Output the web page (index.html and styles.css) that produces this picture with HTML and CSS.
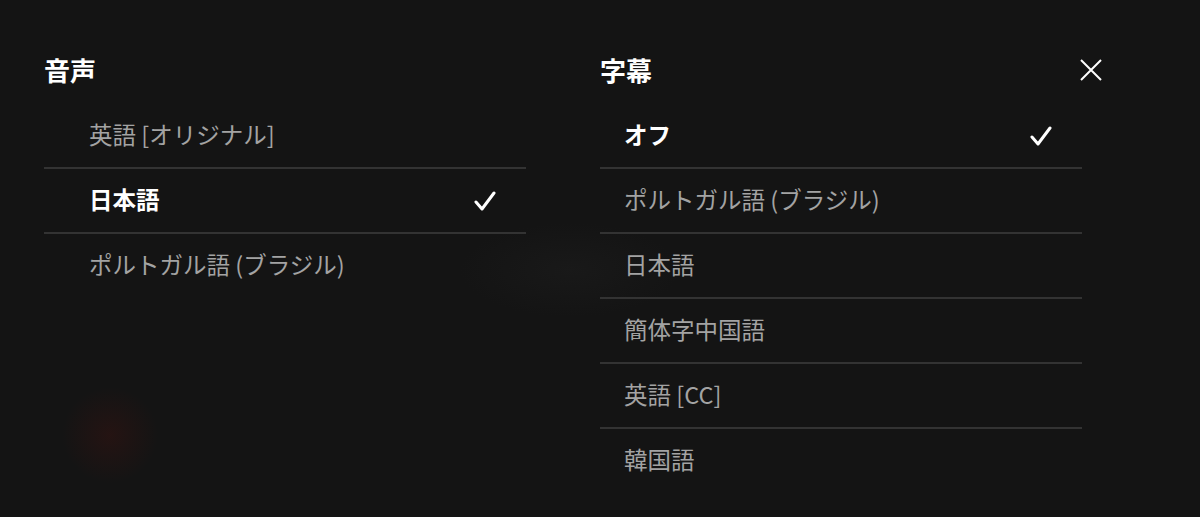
FILE: index.html
```html
<!DOCTYPE html>
<html lang="ja">
<head>
  <meta charset="UTF-8" />
  <meta name="viewport" content="width=device-width, initial-scale=1.0"/>
  <title>音声と字幕</title>
  <link rel="stylesheet" href="styles.css">
</head>
<body>
  <div class="track-menu">
    <div class="panel">
      <div class="panel-head">
        <h2>音声</h2>
      </div>
      <ul class="options audio">
        <li class="option">英語 [オリジナル]</li>
        <li class="option selected">日本語
          <svg class="check" viewBox="0 0 22 22"><polyline points="2,12 8,19 20,3"/></svg>
        </li>
        <li class="option">ポルトガル語 (ブラジル)</li>
      </ul>
    </div>

    <div class="panel">
      <div class="panel-head">
        <h2>字幕</h2>
        <button class="close" aria-label="閉じる">
          <svg viewBox="0 0 22 22"><path d="M1 1 L21 21 M21 1 L1 21"/></svg>
        </button>
      </div>
      <ul class="options subs">
        <li class="option selected">オフ
          <svg class="check" viewBox="0 0 22 22"><polyline points="2,12 8,19 20,3"/></svg>
        </li>
        <li class="option">ポルトガル語 (ブラジル)</li>
        <li class="option">日本語</li>
        <li class="option">簡体字中国語</li>
        <li class="option">英語 [CC]</li>
        <li class="option">韓国語</li>
      </ul>
    </div>
  </div>
</body>
</html>
```

FILE: styles.css
```css
html, body {
  height: 100%;
}

body {
  margin: 0;
  overflow: hidden;
  font-family: "Noto Sans CJK JP", "Noto Sans", sans-serif;
  color: #fff;
  background:
    radial-gradient(circle at 110px 435px, rgba(80, 18, 14, 0.28) 0, rgba(80, 18, 14, 0) 48px),
    radial-gradient(ellipse at 570px 270px, rgba(36, 36, 36, 0.3) 0, rgba(20, 20, 20, 0) 110px),
    #141414;
}

.track-menu {
  display: flex;
  gap: 74px;
  padding: 54px 0 0 44px;
}

.panel {
  width: 482px;
}

.panel-head {
  display: flex;
  align-items: center;
  justify-content: space-between;
  height: 32px;
  margin-right: -20px; /* le X dépasse la liste */
  margin-bottom: 18px;
}

.panel-head h2 {
  margin: 0;
  font-size: 26px;
  line-height: 32px;
  font-weight: 700;
}

.close {
  width: 22px;
  height: 22px;
  padding: 0;
  border: none;
  background: none;
  cursor: pointer;
}

.close svg {
  display: block;
  width: 22px;
  height: 22px;
  stroke: #fff;
  stroke-width: 2;
  fill: none;
}

.options {
  list-style: none;
  margin: 0;
  padding: 0;
}

.option {
  display: flex;
  align-items: center;
  justify-content: space-between;
  box-sizing: border-box;
  height: 65px;
  padding-right: 30px;
  padding-bottom: 3px;
  border-bottom: 2px solid #333;
  font-size: 23.5px;
  color: #a3a3a3;
  cursor: pointer;
}

.option:last-child {
  border-bottom: none;
  padding-bottom: 5px;
}

.audio .option {
  padding-left: 45px;
}

.subs .option {
  padding-left: 24px;
}

.option.selected {
  color: #fff;
  font-weight: 700;
}

.check {
  width: 22px;
  height: 22px;
  margin-top: 3px;
  stroke: #fff;
  stroke-width: 3;
  fill: none;
  stroke-linecap: round;
  stroke-linejoin: round;
}
```
